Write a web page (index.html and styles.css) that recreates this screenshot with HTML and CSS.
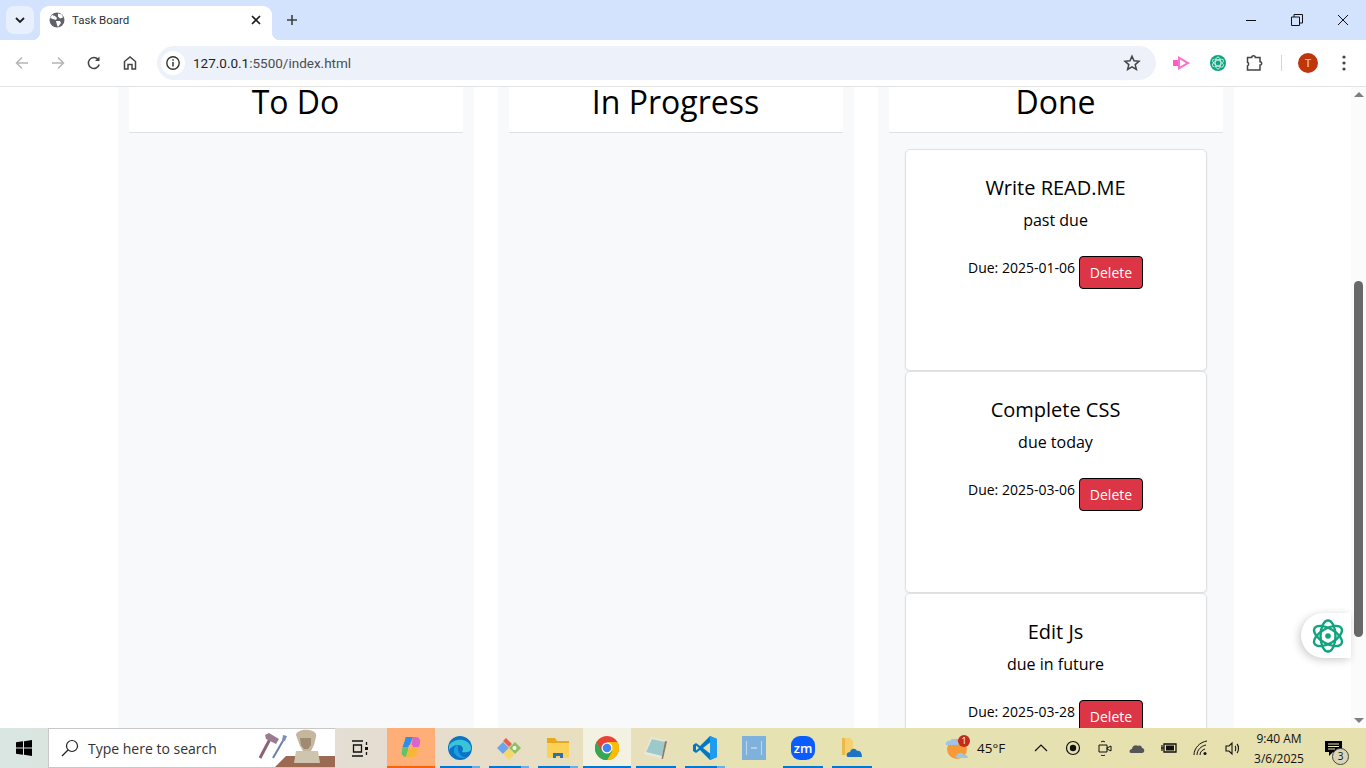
FILE: index.html
```html
<!DOCTYPE html>
<html lang="en">
<head>
    <meta charset="UTF-8">
    <meta name="viewport" content="width=device-width, initial-scale=1.0">
    <title>Task Board</title>
    <link rel="stylesheet" href="styles.css">
</head>
<body>
    <div class="window">
        <!-- tab strip -->
        <div class="tabstrip">
            <div class="tab-search">
                <svg width="12" height="12" viewBox="0 0 12 12"><path d="M2 4l4 4 4-4" fill="none" stroke="#1f1f1f" stroke-width="1.8"/></svg>
            </div>
            <div class="tab">
                <svg class="favicon" width="16" height="16" viewBox="0 0 16 16">
                    <circle cx="8" cy="8" r="7.5" fill="#5f6368"/>
                    <path d="M3 3l3 1 2 2-1 2-3-1-3-1zM9 1.500l4 1 1 3-3 1-2-2zM7 9l4 0 1 2-3 4-1-2z" fill="#fff"/>
                </svg>
                <span class="tab-title">Task Board</span>
                <svg class="tab-close" width="10" height="10" viewBox="0 0 10 10"><path d="M1 1l8 8M9 1l-8 8" stroke="#1f1f1f" stroke-width="1.700"/></svg>
            </div>
            <svg class="new-tab" width="12" height="12" viewBox="0 0 12 12"><path d="M6 1v10M1 6h10" stroke="#3c4043" stroke-width="1.600"/></svg>
            <div class="win-controls">
                <svg width="12" height="12" viewBox="0 0 12 12"><path d="M1 6.500h10" stroke="#111" stroke-width="1"/></svg>
                <svg width="12" height="12" viewBox="0 0 12 12"><path d="M.5 3h8v8.500h-8zM3 3V.5h8.500V9H8.500" fill="none" stroke="#111"/></svg>
                <svg width="12" height="12" viewBox="0 0 12 12"><path d="M1 1l10 10M11 1L1 11" stroke="#111"/></svg>
            </div>
        </div>

        <!-- toolbar -->
        <div class="toolbar">
            <div class="nav-icons">
                <svg width="16" height="16" viewBox="0 0 16 16"><path d="M14 8H2.500M8 2.500L2.500 8 8 13.500" fill="none" stroke="#b3b5b8" stroke-width="1.500"/></svg>
                <svg width="16" height="16" viewBox="0 0 16 16"><path d="M2 8h11.500M8 2.500L13.500 8 8 13.500" fill="none" stroke="#b3b5b8" stroke-width="1.500"/></svg>
                <svg width="16" height="16" viewBox="0 0 16 16"><path d="M13.200 9.500A5.500 5.500 0 1 1 12 4.300" fill="none" stroke="#444" stroke-width="1.500"/><path d="M13.500 1.500v4.500H9z" fill="#444"/></svg>
                <svg width="16" height="16" viewBox="0 0 16 16"><path d="M2.500 14V6.500L8 2l5.500 4.500V14h-3.500V9.500H6V14z" fill="none" stroke="#444" stroke-width="1.500"/></svg>
            </div>
            <div class="omnibox">
                <div class="site-info">
                    <svg width="16" height="16" viewBox="0 0 16 16"><circle cx="8" cy="8" r="6.200" fill="none" stroke="#333" stroke-width="1.400"/><path d="M8 7v4.500M8 4.300v1.500" stroke="#333" stroke-width="1.500"/></svg>
                </div>
                <span class="url"><span class="url-host">127.0.0.1</span>:5500/index.html</span>
                <svg class="star" width="18" height="18" viewBox="0 0 18 18"><path d="M9 2.200l2 4.600 5 .5-3.800 3.300 1.200 4.900L9 12.900l-4.400 2.600 1.200-4.900L2 7.300l5-.5z" fill="none" stroke="#444" stroke-width="1.500"/></svg>
            </div>
            <div class="ext-icons">
                <svg class="ext-pink" width="17" height="14" viewBox="0 0 17 14"><path d="M0 4h6v6H0z" fill="#ff5cc8"/><path d="M5 0l12 7-12 7zM7 3.500v7L13 7z" fill="#ff6fd0" fill-rule="evenodd"/></svg>
                <svg class="ext-gpt" width="16" height="16" viewBox="0 0 16 16">
                    <circle cx="8" cy="8" r="8" fill="#10a37f"/>
                    <g fill="none" stroke="#d6f2ea" stroke-width=".9"><ellipse cx="8" cy="8" rx="6" ry="2.800" transform="rotate(30 8 8)"/><ellipse cx="8" cy="8" rx="6" ry="2.800" transform="rotate(90 8 8)"/><ellipse cx="8" cy="8" rx="6" ry="2.800" transform="rotate(150 8 8)"/></g>
                </svg>
                <svg class="ext-puzzle" width="18" height="18" viewBox="0 0 18 18"><path d="M1.500 3.500h4.200a1.800 1.800 0 0 1 3.600 0H14v4.200a1.700 1.700 0 0 1 0 3.400V16H1.500v-4.200a2 2 0 0 0 0-3.600z" fill="none" stroke="#444" stroke-width="1.500"/></svg>
                <span class="toolbar-sep"></span>
                <span class="avatar">T</span>
                <svg class="menu-dots" width="4" height="16" viewBox="0 0 4 16"><circle cx="2" cy="2" r="1.600" fill="#444"/><circle cx="2" cy="8" r="1.600" fill="#444"/><circle cx="2" cy="14" r="1.600" fill="#444"/></svg>
            </div>
        </div>

        <!-- page -->
        <div class="viewport">
            <div class="page">
                <div class="board">
                    <section class="column">
                        <h2 class="column-title">To Do</h2>
                    </section>
                    <section class="column">
                        <h2 class="column-title">In Progress</h2>
                    </section>
                    <section class="column">
                        <h2 class="column-title">Done</h2>
                        <div class="card-list">
                            <article class="task-card">
                                <h3>Write READ.ME</h3>
                                <p class="task-desc">past due</p>
                                <div class="task-due"><span>Due: 2025-01-06</span><button class="delete-btn">Delete</button></div>
                            </article>
                            <article class="task-card">
                                <h3>Complete CSS</h3>
                                <p class="task-desc">due today</p>
                                <div class="task-due"><span>Due: 2025-03-06</span><button class="delete-btn">Delete</button></div>
                            </article>
                            <article class="task-card">
                                <h3>Edit Js</h3>
                                <p class="task-desc">due in future</p>
                                <div class="task-due"><span>Due: 2025-03-28</span><button class="delete-btn">Delete</button></div>
                            </article>
                        </div>
                    </section>
                </div>
            </div>
            <div class="scrollbar">
                <span class="arrow-up"></span>
                <div class="thumb"></div>
                <span class="arrow-down"></span>
            </div>
            <div class="chat-float">
                <svg width="32" height="36" viewBox="0 0 32 36">
                    <g fill="none" stroke="#10a37f" stroke-width="2.400"><ellipse cx="16" cy="18" rx="15.500" ry="7.500" transform="rotate(30 16 18)"/><ellipse cx="16" cy="18" rx="15.500" ry="7.500" transform="rotate(90 16 18)"/><ellipse cx="16" cy="18" rx="15.500" ry="7.500" transform="rotate(150 16 18)"/></g>
                    <circle cx="16" cy="18" r="2.800" fill="#10a37f"/>
                </svg>
            </div>
        </div>

        <!-- taskbar -->
        <div class="taskbar">
            <div class="start-btn">
                <svg width="16" height="16" viewBox="0 0 16 16"><path d="M0 2.300l7-1v6.200H0zM8 1.200L16 0v7.500H8zM0 8.500h7v6.200l-7-1zM8 8.500h8V16l-8-1.200z" fill="#000"/></svg>
            </div>
            <div class="search-box">
                <svg width="18" height="18" viewBox="0 0 18 18"><circle cx="11" cy="7" r="5.500" fill="none" stroke="#222" stroke-width="1.200"/><path d="M7 11l-6 6" stroke="#222" stroke-width="1.200"/></svg>
                <span class="search-text">Type here to search</span>
                <svg class="search-art" width="78" height="40" viewBox="0 0 78 40">
                    <path d="M3 31L13 12" stroke="#8d6275" stroke-width="3"/>
                    <path d="M8 8l4-2 10 6-3 5-10-5z" fill="#9a7b90"/>
                    <path d="M16 31L27 12" stroke="#6b7fa8" stroke-width="2"/>
                    <path d="M25 14l1-6 4 1-2 5z" fill="#7b8fb5"/>
                    <path d="M18 40l11-11h49v11z" fill="#9c6a52"/>
                    <path d="M39 24h22l2 12H37z" fill="#cfc4ae"/>
                    <path d="M39 8c0-4 8-6 13-5 5 1 8 3 7 7l-2 8-3 6h-8l-3-5z" fill="#c5b79e"/>
                    <path d="M43 11h11v7l-3 4h-4l-3-4z" fill="#a08a72"/>
                </svg>
            </div>
            <div class="task-view">
                <svg width="17" height="17" viewBox="0 0 17 17"><path d="M0 1h11M0 16h11M1.500 5h8v7h-8zM14.500 2v3M14.500 12v3" fill="none" stroke="#111" stroke-width="1.300"/><path d="M13 7h3v3h-3z" fill="#111"/></svg>
            </div>
            <div class="app-list">
                <div class="app app-copilot">
                    <svg width="24" height="24" viewBox="0 0 24 24">
                        <path d="M7 2h7l-4 10H3.500L6 5c.3-2 .5-3 1-3z" fill="#2f8fe8"/>
                        <path d="M14 2h3c3 0 5 3 4 6l-1 4h-8z" fill="#d966c8"/>
                        <path d="M3.500 12H10L7 22c-3 0-5-3-4-6z" fill="#5cc46a"/>
                        <path d="M10 12h10l-2 6c-1 3-3 4-6 4H7z" fill="#f7b733"/>
                        <path d="M10 10h4l-1 4H9z" fill="#ffae78"/>
                    </svg>
                </div>
                <div class="app app-on app-multi">
                    <svg width="24" height="24" viewBox="0 0 24 24">
                        <circle cx="12" cy="12" r="12" fill="#0c74c4"/>
                        <path d="M1 10C4 2 20 1 23 11c1 5-5 6-9 5 2-3 1-7-4-7-4 0-7 2-9 5z" fill="#39c4d8"/>
                        <path d="M10 9c-4 1-6 6-2 10 2 3 7 4 11 2-6 1-10-4-9-12z" fill="#1b9de2"/>
                    </svg>
                </div>
                <div class="app app-on app-multi">
                    <svg width="24" height="24" viewBox="0 0 24 24">
                        <path d="M0 12l6-6 6 6-6 6z" fill="#6ba5ec"/>
                        <path d="M6 5l3-3 6 6-3 3z" fill="#e8604c"/>
                        <path d="M12 12l6-6 6 6-6 6z" fill="#8cc265"/>
                        <path d="M6 18l6-6 6 6-6 6z" fill="#f5d76e"/>
                        <circle cx="17.500" cy="12" r="2" fill="#fff"/>
                    </svg>
                </div>
                <div class="app app-on app-multi">
                    <svg width="22" height="20" viewBox="0 0 22 20">
                        <path d="M0 0h8l2 3h12v17H0z" fill="#e8a91e"/>
                        <path d="M0 5h22v15H0z" fill="#fbd257"/>
                        <path d="M6 15h10v5h-3v-2H9v2H6z" fill="#2a6fb8"/>
                    </svg>
                </div>
                <div class="app app-on app-active">
                    <svg width="24" height="24" viewBox="0 0 24 24">
                        <circle cx="12" cy="12" r="12" fill="#ea4335"/>
                        <path d="M12 24a12 12 0 0 0 10.400-18H12l5.200 9z" fill="#fbbc04"/>
                        <path d="M1.600 6A12 12 0 0 0 12 24l5.200-9H6.800z" fill="#34a853"/>
                        <circle cx="12" cy="12" r="5.500" fill="#fff"/>
                        <circle cx="12" cy="12" r="4.300" fill="#4285f4"/>
                    </svg>
                </div>
                <div class="app app-on">
                    <svg width="24" height="24" viewBox="0 0 24 24">
                        <path d="M7 1l16 4-4 18L0 18z" fill="#e8e8dc"/>
                        <path d="M8 3l13 3-3 14L2 16z" fill="#9ccaca"/>
                        <path d="M21 5l2 .5-4 17.500-1.500-.3z" fill="#8a7a68"/>
                    </svg>
                </div>
                <div class="app app-on app-multi">
                    <svg width="24" height="24" viewBox="0 0 24 24">
                        <path d="M17 0l7 3v18l-7 3L7 14l-4 3-3-2v-6l3-2 4 3z" fill="#0078c8"/>
                        <path d="M17 0l7 3v18l-7 3z" fill="#1f9cf0"/>
                        <path d="M17 6.500L10 12l7 5.500z" fill="#e6e2b2"/>
                        <path d="M3 9.500L6 12l-3 2.500z" fill="#e6e2b2"/>
                    </svg>
                </div>
                <div class="app">
                    <svg width="24" height="24" viewBox="0 0 24 24">
                        <path d="M0 0h24v24H0z" fill="#7fb1dd"/>
                        <path d="M4.500 5v14M19.500 5v14" stroke="#c2d8ea" stroke-width="1"/>
                        <path d="M9 12h6" stroke="#e4eef6" stroke-width="1"/>
                    </svg>
                </div>
                <div class="app app-on">
                    <span class="zoom-icon">zm</span>
                </div>
                <div class="app app-on">
                    <svg width="20" height="20" viewBox="0 0 20 20">
                        <path d="M0 0h8l3 3v14H0z" fill="#f4d06f"/>
                        <path d="M0 0h3v17H0z" fill="#e9b949"/>
                        <path d="M6 19c-2 0-2-5 2-5 1-4 6-4 7-1 3-1 5 2 5 6z" fill="#1b74c5"/>
                    </svg>
                </div>
            </div>
            <div class="weather">
                <span class="weather-icon">
                    <svg width="24" height="24" viewBox="0 0 24 24">
                        <circle cx="12" cy="13" r="10" fill="#f59a36"/>
                        <path d="M1 9c-1-3 2-5 4-4 1-3 6-3 7 0 2 0 3 3 1 4z" fill="#9fc4e4"/>
                        <path d="M12 22c-2 0-2-3 0-3 1-3 6-3 7 0 3-1 5 3 3 3z" fill="#9fc4e4"/>
                    </svg>
                    <span class="weather-badge">1</span>
                </span>
                <span class="weather-temp">45°F</span>
            </div>
            <div class="tray">
                <svg width="16" height="16" viewBox="0 0 16 16"><path d="M2 11l6-6 6 6" fill="none" stroke="#111" stroke-width="1.200"/></svg>
                <svg width="16" height="16" viewBox="0 0 16 16"><circle cx="8" cy="8" r="6.500" fill="none" stroke="#111" stroke-width="1.200"/><circle cx="8" cy="8" r="3.200" fill="#111"/></svg>
                <svg width="16" height="16" viewBox="0 0 16 16"><path d="M2 5h8v7H2zM10 8l4-2v5l-4-2zM4 2c1-1 3-1 4 0M4 15c1 1 3 1 4 0" fill="none" stroke="#111" stroke-width="1"/></svg>
                <svg width="16" height="16" viewBox="0 0 16 16"><path d="M2 13c-2 0-2-4 1-4 0-3 4-5 6-3 2-1 4 0 4 2 3 0 3 5 0 5z" fill="#555"/></svg>
                <svg width="16" height="16" viewBox="0 0 16 16"><path d="M0 8h3M1 5v6" stroke="#111" stroke-width="1.200"/><path d="M3 4h12v8H3z" fill="none" stroke="#111" stroke-width="1.300"/><path d="M5 5.500h8v5H5z" fill="#111"/></svg>
                <svg width="16" height="16" viewBox="0 0 16 16"><g fill="none" stroke="#111" stroke-width="1"><path d="M1 15C1 8 7 2 14 1"/><path d="M4 15c0-5 4-9 9-10"/><path d="M7 15c0-3 2-5 5-6"/></g><circle cx="12" cy="13.500" r="1.500" fill="#111"/></svg>
                <svg width="16" height="16" viewBox="0 0 16 16"><path d="M1 6h3l3-3v11l-3-3H1z" fill="none" stroke="#111" stroke-width="1.100"/><path d="M10 6c1 1 1 4 0 5M12 4c2 2 2 7 0 9" fill="none" stroke="#111" stroke-width="1.100"/></svg>
            </div>
            <div class="clock">
                <span>9:40 AM</span>
                <span>3/6/2025</span>
            </div>
            <div class="notify">
                <svg width="17" height="15" viewBox="0 0 17 15"><path d="M0 0h17v11H8l-4 4v-4H0z" fill="#000"/><path d="M3 3h11M3 5.500h11M3 8h7" stroke="#e6e2b2"/></svg>
                <span class="notify-count">3</span>
            </div>
        </div>
    </div>
</body>
</html>
```

FILE: styles.css
```css
/* base */
html, body {
    margin: 0;
    padding: 0;
    height: 100%;
    overflow: hidden;
}
body {
    font-family: "Open Sans", "Liberation Sans", sans-serif;
    color: #000;
}
svg {
    display: block;
    flex: none;
}
.window {
    display: flex;
    flex-direction: column;
    width: 1366px;
    height: 768px;
    overflow: hidden;
}

/* tab strip */
.tabstrip {
    display: flex;
    align-items: flex-end;
    height: 40px;
    padding-left: 6px;
    background-color: #d3e3fd;
    flex: none;
}
.tab-search {
    display: flex;
    align-items: center;
    justify-content: center;
    width: 28px;
    height: 28px;
    margin-bottom: 6px;
    border-radius: 8px;
    background-color: #e8f0fe;
}
.tab {
    position: relative;
    display: flex;
    align-items: center;
    width: 232px;
    height: 34px;
    margin-left: 6px;
    padding: 0 11px 6px 9px;
    box-sizing: border-box;
    border-radius: 9px 9px 0 0;
    background-color: #fff;
}
.tab::before,
.tab::after {
    content: "";
    position: absolute;
    bottom: 0;
    width: 8px;
    height: 8px;
}
.tab::before {
    left: -8px;
    background: radial-gradient(circle at 0 0, #d3e3fd 8px, #fff 8.500px);
}
.tab::after {
    right: -8px;
    background: radial-gradient(circle at 100% 0, #d3e3fd 8px, #fff 8.500px);
}
.tab-title {
    flex: 1;
    margin-left: 7px;
    font-family: Roboto, sans-serif;
    font-size: 11.500px;
    color: #303134;
}
.new-tab {
    margin: 0 0 14px 14px;
}
.win-controls {
    display: flex;
    align-items: center;
    gap: 34px;
    margin-left: auto;
    margin-right: 17px;
    align-self: center;
}

/* toolbar */
.toolbar {
    display: flex;
    align-items: center;
    height: 47px;
    box-sizing: border-box;
    padding-bottom: 1px;
    border-bottom: 1px solid #e3e3e3;
    border-radius: 8px 8px 0 0;
    background-color: #fff;
    flex: none;
}
.nav-icons {
    display: flex;
    align-items: center;
    gap: 20px;
    width: 157px;
    padding-left: 14px;
    box-sizing: border-box;
}
.omnibox {
    display: flex;
    align-items: center;
    width: 999px;
    height: 34px;
    padding: 0 15px 0 4px;
    box-sizing: border-box;
    border-radius: 17px;
    background-color: #edf2fa;
}
.site-info {
    display: flex;
    align-items: center;
    justify-content: center;
    width: 24px;
    height: 24px;
    border-radius: 50%;
    background-color: #fff;
}
.url {
    flex: 1;
    margin-left: 8px;
    font-family: Roboto, sans-serif;
    font-size: 13.500px;
    color: #4a4d51;
}
.url-host {
    color: #1f1f1f;
}
.ext-icons {
    display: flex;
    align-items: center;
    flex: 1;
    padding-left: 17px;
}
.ext-gpt {
    margin-left: 20px;
}
.ext-puzzle {
    margin-left: 20px;
}
.toolbar-sep {
    width: 1px;
    height: 16px;
    margin-left: 17px;
    background-color: #c4d7f5;
}
.avatar {
    display: flex;
    align-items: center;
    justify-content: center;
    width: 20px;
    height: 20px;
    margin-left: 16px;
    border-radius: 50%;
    background-color: #bf360c;
    color: #f4b8a0;
    font-size: 11px;
    font-weight: 600;
}
.menu-dots {
    margin-left: 24px;
}

/* page */
.viewport {
    position: relative;
    display: flex;
    flex: 1;
    min-height: 0;
}
.page {
    flex: 1;
    overflow: hidden;
    background-color: #fff;
}
.board {
    display: flex;
    justify-content: center;
    gap: 24px;
}
.column {
    width: 356px;
    height: 760px;
    padding: 0 11px;
    box-sizing: border-box;
    background-color: #f8f9fa;
}
.column-title {
    margin: 0;
    padding-bottom: 16px;
    border-bottom: 1px solid #dee2e6;
    background-color: #fff;
    font-size: 32px;
    font-weight: 400;
    line-height: 29px;
    text-align: center;
}
.card-list {
    display: flex;
    flex-direction: column;
    align-items: center;
    padding-top: 16px;
}
.task-card {
    width: 302px;
    height: 222px;
    padding-top: 26px;
    box-sizing: border-box;
    flex: none;
    border: 1px solid #dfe1e5;
    border-radius: 5px;
    background-color: #fff;
    box-shadow: 0 1px 2px rgba(0, 0, 0, 0.08);
    text-align: center;
}
.task-card h3 {
    margin: 0 0 8px;
    font-size: 20px;
    font-weight: 400;
    line-height: 24px;
}
.task-desc {
    margin: 0 0 24px;
    font-size: 16px;
    line-height: 24px;
}
.task-due {
    display: flex;
    justify-content: center;
    gap: 4px;
    font-size: 14px;
    line-height: 24px;
}
.delete-btn {
    width: 64px;
    height: 33px;
    padding: 0;
    border: 1px solid #000;
    border-radius: 4px;
    background-color: #dc3545;
    color: #fff;
    font-family: inherit;
    font-size: 14px;
}

/* scrollbar */
.scrollbar {
    position: relative;
    width: 15px;
    background-color: #fbfbfb;
    flex: none;
}
.arrow-up,
.arrow-down {
    position: absolute;
    left: 3px;
    border-left: 5px solid transparent;
    border-right: 5px solid transparent;
}
.arrow-up {
    top: 5px;
    border-bottom: 5px solid #7f7f7f;
}
.arrow-down {
    bottom: 5px;
    border-top: 5px solid #7f7f7f;
}
.thumb {
    position: absolute;
    top: 194px;
    left: 3px;
    width: 9px;
    height: 356px;
    border-radius: 5px;
    background-color: #686868;
}
.chat-float {
    position: absolute;
    top: 526px;
    right: 15px;
    display: flex;
    align-items: center;
    width: 50px;
    height: 45px;
    padding-left: 11px;
    box-sizing: border-box;
    border-radius: 23px 0 0 23px;
    background-color: #fff;
    box-shadow: -2px 2px 8px rgba(0, 0, 0, 0.2);
}

/* taskbar */
.taskbar {
    display: flex;
    align-items: center;
    height: 40px;
    flex: none;
    background: linear-gradient(90deg, #d9e6e2 0, #e6dcd0 30%, #e8dfc0 42%, #e6e2b2 55%, #e6e0ae 100%);
    font-size: 12px;
    color: #111;
}
.start-btn {
    display: flex;
    align-items: center;
    justify-content: center;
    width: 48px;
    height: 40px;
}
.search-box {
    display: flex;
    align-items: center;
    position: relative;
    width: 287px;
    height: 40px;
    padding-left: 12px;
    box-sizing: border-box;
    border: 1px solid #c8c8c8;
    border-right: none;
    background-color: #fff;
}
.search-text {
    margin-left: 9px;
    font-size: 14px;
    color: #333;
}
.search-art {
    position: absolute;
    right: 0;
    bottom: 0;
}
.task-view {
    display: flex;
    align-items: center;
    justify-content: center;
    width: 50px;
    padding-right: 2px;
}
.app-list {
    display: flex;
    gap: 1px;
    height: 40px;
}
.app {
    position: relative;
    display: flex;
    align-items: center;
    justify-content: center;
    width: 48px;
    height: 40px;
}
.app-on::after {
    content: "";
    position: absolute;
    left: 4px;
    right: 4px;
    bottom: 0;
    height: 2px;
    background-color: #0078d4;
}
.app-multi::after {
    background: linear-gradient(90deg, #0078d4 80%, #6aaee6 80%);
}
.app-copilot {
    background-color: #ffae78;
    border-bottom: 2px solid #f7630c;
    box-sizing: border-box;
}
.app-active {
    background-color: #f3f1e2;
}
.app-active::after {
    left: 0;
    right: 0;
}
.zoom-icon {
    display: flex;
    align-items: center;
    justify-content: center;
    width: 24px;
    height: 24px;
    border-radius: 9px;
    background-color: #0b5cff;
    color: #fff;
    font-size: 13px;
    font-weight: 600;
}
.weather {
    display: flex;
    align-items: center;
    width: 88px;
    margin-left: 69px;
}
.weather-icon {
    position: relative;
}
.weather-badge {
    position: absolute;
    top: -1px;
    right: -1px;
    width: 12px;
    height: 12px;
    border-radius: 50%;
    background-color: #c42b1c;
    color: #fff;
    font-size: 9px;
    line-height: 12px;
    text-align: center;
}
.weather-temp {
    margin-left: 8px;
    font-size: 13.500px;
}
.tray {
    display: flex;
    align-items: center;
    gap: 16px;
}
.clock {
    display: flex;
    flex-direction: column;
    align-items: center;
    width: 50px;
    margin-left: 13px;
    padding-top: 2px;
    line-height: 20px;
}
.notify {
    position: relative;
    margin-left: 21px;
}
.notify-count {
    position: absolute;
    top: 7px;
    left: 7px;
    width: 15px;
    height: 15px;
    border: 1px solid #444;
    border-radius: 50%;
    background-color: #d8d5b8;
    font-size: 10px;
    line-height: 15px;
    text-align: center;
}
```
